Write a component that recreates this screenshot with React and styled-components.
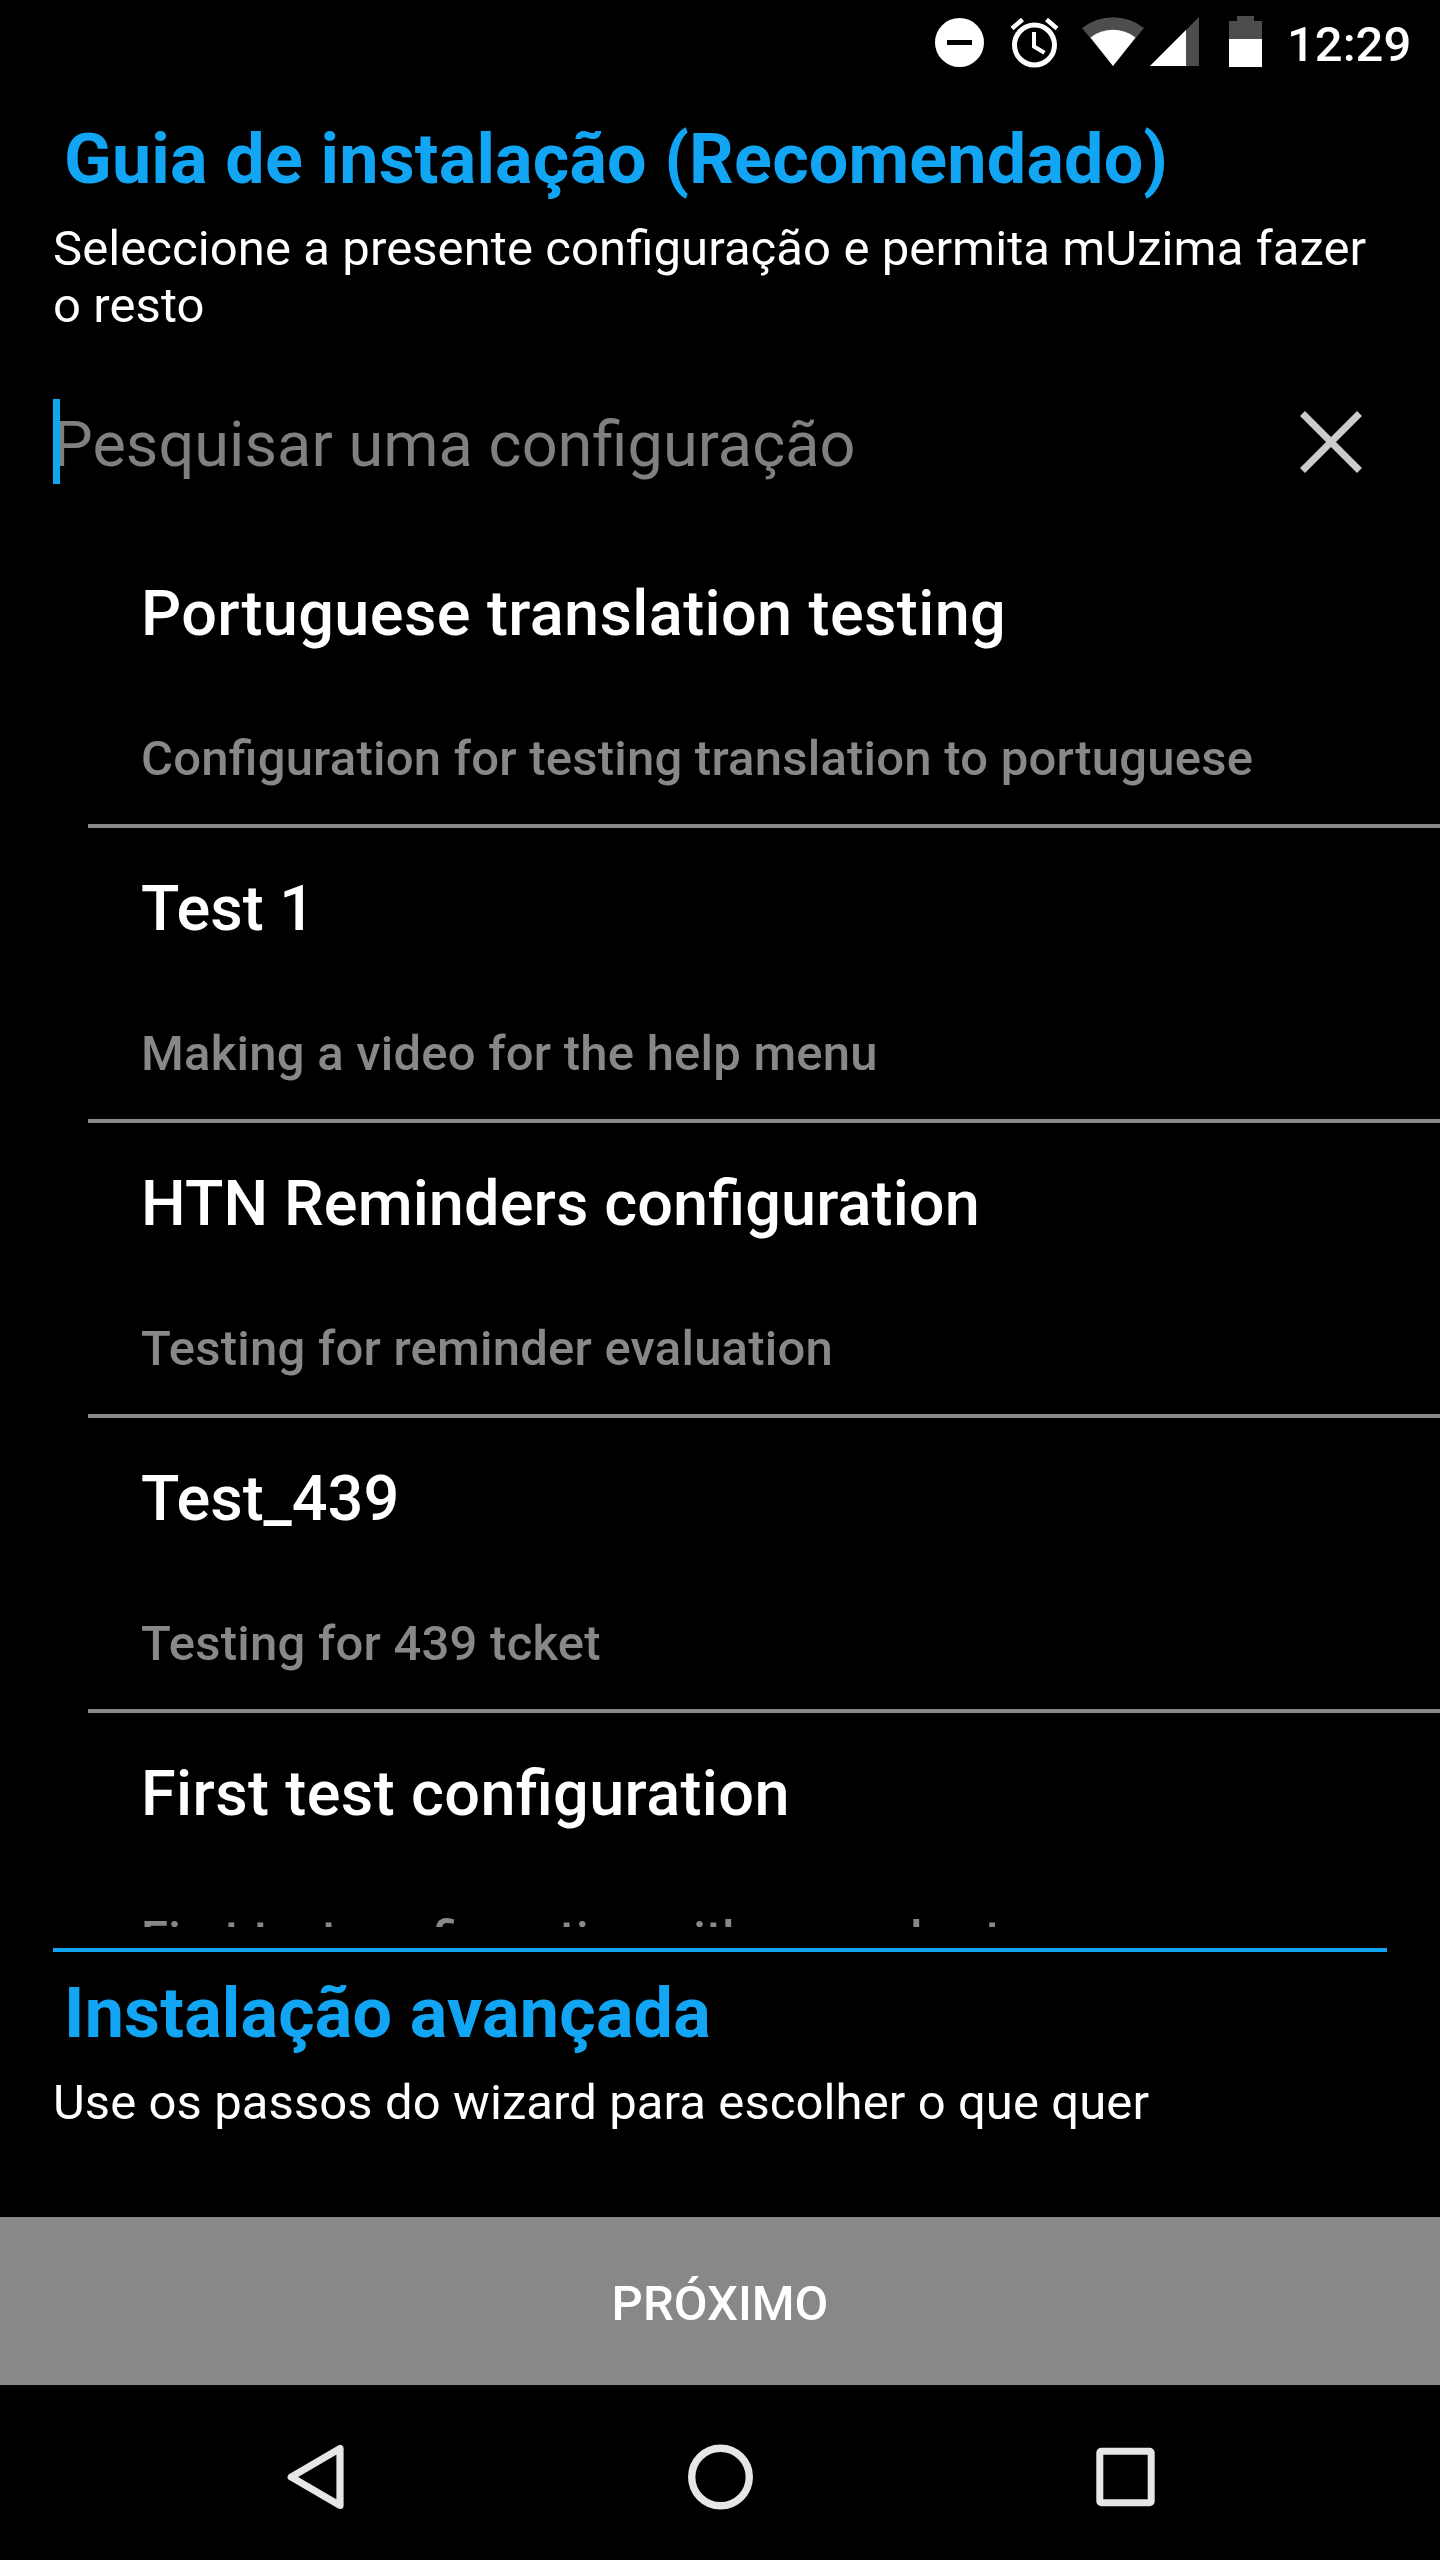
import styled, { createGlobalStyle } from "styled-components";

const colors = {
  black: "#000000",
  white: "#ffffff",
  blue: "#12a5f4",
  grey: "#888888",
  hint: "#808080",
  faded: "#4d4d4d",
  nav: "#e6e6e6",
};

const configurations = [
  {
    name: "Portuguese translation testing",
    description: "Configuration for testing translation to portuguese",
    tracking: 0.38,
  },
  {
    name: "Test 1",
    description: "Making a video for the help menu",
    tracking: 0,
  },
  {
    name: "HTN Reminders configuration",
    description: "Testing for reminder evaluation",
    tracking: 0.12,
  },
  {
    name: "Test_439",
    description: "Testing for 439 tcket",
    tracking: 0,
  },
  {
    name: "First test configuration",
    description: "First test configuration with one cohort",
    tracking: 0.38,
  },
];

function StatusIcons() {
  return (
    <svg width="340" height="84" viewBox="925 0 340 84" aria-hidden="true">
      <circle cx="959.5" cy="42.5" r="24.5" fill={colors.white} />
      <rect x="947" y="40" width="25" height="5" fill={colors.black} />

      <g fill="none" stroke={colors.white}>
        <circle cx="1034.5" cy="45" r="20" strokeWidth="5" />
        <path d="M1034 32v14.5l10.5 6.3" strokeWidth="4" />
        <path d="M1012 28.5l10.5-9M1057 28.5l-10.5-9" strokeWidth="4.5" />
      </g>

      <path d="M1082 28a50 50 0 0 1 62 0L1113 66z" fill={colors.faded} />
      <path d="M1090.5 37.5a37 37 0 0 1 45 0L1113 66z" fill={colors.white} />

      <path d="M1199 17v49h-49z" fill={colors.faded} />
      <path d="M1186 30v36h-36z" fill={colors.white} />

      <path d="M1237 16h17v5h8v18h-33V21h8z" fill={colors.faded} />
      <rect x="1229" y="39" width="33" height="28" fill={colors.white} />
    </svg>
  );
}

/**
 * Render the setup screen
 * @return { JSX }
 */

export default function App() {
  return (
    <Screen>
      <GlobalStyle />
      <StatusBar>
        <StatusIcons />
        <Clock>12:29</Clock>
      </StatusBar>

      <Guide>
        <Heading>Guia de instalação (Recomendado)</Heading>
        <Text>
          Seleccione a presente configuração e permita mUzima fazer o resto
        </Text>
      </Guide>

      <SearchBar>
        <SearchField>
          <Caret />
          Pesquisar uma configuração
        </SearchField>
        <ClearButton aria-label="Limpar">
          <svg width="64" height="64" viewBox="0 0 64 64">
            <path
              d="M3.500 3.500l57 57M60.500 3.500l-57 57"
              fill="none"
              stroke="#cccccc"
              strokeWidth="7"
            />
          </svg>
        </ClearButton>
      </SearchBar>

      <List>
        {configurations.map((item) => (
          <ListItem key={item.name}>
            <ItemName $tracking={item.tracking}>{item.name}</ItemName>
            <ItemDescription>{item.description}</ItemDescription>
          </ListItem>
        ))}
      </List>

      <Advanced>
        <Heading>Instalação avançada</Heading>
        <Text>Use os passos do wizard para escolher o que quer</Text>
      </Advanced>

      <NextButton>PRÓXIMO</NextButton>

      <NavBar>
        <svg width="60" height="70" viewBox="286 2441.5 60 70">
          <path
            d="M340 2448v57L291.200 2476.500z"
            fill="none"
            stroke={colors.nav}
            strokeWidth="7.2"
            strokeLinejoin="round"
          />
        </svg>
        <svg width="66" height="66" viewBox="0 0 66 66">
          <circle
            cx="32.5"
            cy="33"
            r="28.8"
            fill="none"
            stroke={colors.nav}
            strokeWidth="7.4"
          />
        </svg>
        <svg width="60" height="60" viewBox="0 0 60 60">
          <rect
            x="3.8"
            y="4.3"
            width="51.4"
            height="51.4"
            rx="1.5"
            fill="none"
            stroke={colors.nav}
            strokeWidth="7"
          />
        </svg>
      </NavBar>
    </Screen>
  );
}

const GlobalStyle = createGlobalStyle`
  * {
    box-sizing: border-box;
  }

  body {
    margin: 0;
    background-color: ${colors.black};
    font-family: Roboto, sans-serif;
    font-feature-settings: "liga" 1;
  }
`;

const Screen = styled.div`
  display: flex;
  flex-direction: column;
  width: 1440px;
  height: 2560px;
  overflow: hidden;
  background-color: ${colors.black};
  color: ${colors.white};
`;

const StatusBar = styled.header`
  display: flex;
  flex-shrink: 0;
  justify-content: flex-end;
  height: 84px;
  padding-right: 28px;
`;

const Clock = styled.span`
  width: 125px;
  margin-left: 22px;
  font-size: 49px;
  font-weight: 500;
  line-height: 89px;
`;

const Guide = styled.section`
  flex-shrink: 0;
  height: 276px;
  padding: 34px 53px 0;
`;

const Heading = styled.h1`
  margin: 0;
  padding-left: 11px;
  color: ${colors.blue};
  font-size: 70px;
  font-weight: 700;
  letter-spacing: 0.2px;
  line-height: 82px;
`;

const Text = styled.p`
  margin: 20px 0 0;
  font-size: 49px;
  letter-spacing: 0.09px;
  line-height: 57px;
`;

const SearchBar = styled.div`
  display: flex;
  flex-shrink: 0;
  align-items: center;
  justify-content: space-between;
  height: 170px;
  margin-bottom: 3px;
  padding: 0 77px 0 53px;
`;

const SearchField = styled.div`
  position: relative;
  color: ${colors.hint};
  font-size: 63px;
  letter-spacing: 0.06px;
  line-height: 74px;
`;

const Caret = styled.span`
  position: absolute;
  top: -9px;
  left: 0;
  width: 7px;
  height: 85px;
  background-color: ${colors.blue};
`;

const ClearButton = styled.button`
  display: flex;
  margin-bottom: 6px;
  padding: 0;
  border: none;
  background: none;
`;

const List = styled.ul`
  flex-shrink: 0;
  height: 1394px;
  margin: 0;
  padding: 0 0 0 88px;
  overflow: hidden;
  list-style: none;
`;

const ListItem = styled.li`
  height: 295px;
  padding: 44px 0 0 53px;
  border-bottom: 4px solid ${colors.grey};
`;

const ItemName = styled.h2`
  margin: 0;
  font-size: 63px;
  font-weight: 500;
  letter-spacing: ${({ $tracking }) => $tracking}px;
  line-height: 74px;
`;

const ItemDescription = styled.p`
  margin: 79px 0 0;
  color: ${colors.grey};
  font-size: 49px;
  font-weight: 500;
  letter-spacing: 0.23px;
  line-height: 57px;
`;

const Advanced = styled.section`
  flex-shrink: 0;
  height: 269px;
  margin: 21px 53px 0;
  padding-top: 20px;
  border-top: 4px solid ${colors.blue};
`;

const NextButton = styled.button`
  flex-shrink: 0;
  height: 168px;
  padding: 4px 0 0;
  border: none;
  background-color: ${colors.grey};
  color: ${colors.white};
  font-family: inherit;
  font-size: 49px;
  font-weight: 500;
`;

const NavBar = styled.nav`
  display: flex;
  align-items: center;
  justify-content: space-between;
  height: 175px;
  padding: 8px 284px 0 286px;
`;
